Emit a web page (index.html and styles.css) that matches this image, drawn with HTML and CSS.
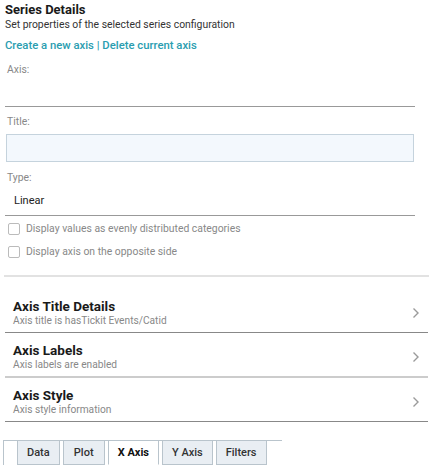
FILE: index.html
```html
<!DOCTYPE html>
<html lang="en">
<head>
    <meta charset="UTF-8">
    <title>Series Details</title>
    <link rel="stylesheet" href="styles.css">
</head>
<body>
    <div class="panel">
        <div class="header">
            <h2>Series Details</h2>
            <p class="subtitle">Set properties of the selected series configuration</p>
            <p class="links"><a href="#">Create a new axis</a> | <a href="#">Delete current axis</a></p>
        </div>

        <div class="form">
            <label class="field-label">Axis:</label>
            <div class="line-field"></div>

            <label class="field-label title-label">Title:</label>
            <input class="text-input" type="text">

            <label class="field-label type-label">Type:</label>
            <div class="line-field select-field">Linear</div>

            <label class="check"><span class="box"></span>Display values as evenly distributed categories</label>
            <label class="check"><span class="box"></span>Display axis on the opposite side</label>
        </div>

        <div class="separator"></div>

        <ul class="sections">
            <li class="section">
                <div>
                    <h3>Axis Title Details</h3>
                    <p>Axis title is hasTickit Events/Catid</p>
                </div>
                <svg class="chevron" width="8" height="12" viewBox="0 0 8 12"><path d="M1.5 1.5 L6 6 L1.5 10.5" fill="none" stroke="#9a9a9a" stroke-width="1.4"/></svg>
            </li>
            <li class="section light">
                <div>
                    <h3>Axis Labels</h3>
                    <p>Axis labels are enabled</p>
                </div>
                <svg class="chevron" width="8" height="12" viewBox="0 0 8 12"><path d="M1.5 1.5 L6 6 L1.5 10.5" fill="none" stroke="#9a9a9a" stroke-width="1.4"/></svg>
            </li>
            <li class="section">
                <div>
                    <h3>Axis Style</h3>
                    <p>Axis style information</p>
                </div>
                <svg class="chevron" width="8" height="12" viewBox="0 0 8 12"><path d="M1.5 1.5 L6 6 L1.5 10.5" fill="none" stroke="#9a9a9a" stroke-width="1.4"/></svg>
            </li>
        </ul>

        <div class="tabs">
            <span class="tab">Data</span>
            <span class="tab">Plot</span>
            <span class="tab active">X Axis</span>
            <span class="tab">Y Axis</span>
            <span class="tab">Filters</span>
        </div>
    </div>
</body>
</html>
```

FILE: styles.css
```css
body {
    margin: 0;
    font-family: Roboto, "Liberation Sans", sans-serif;
    background: #fff;
    color: #222;
}

.panel {
    width: 435px;
    height: 471px;
    overflow: hidden;
}

.header {
    padding: 2px 5px 0;
}

.header h2 {
    margin: 0;
    font-size: 13px;
    line-height: 16px;
    font-weight: bold;
    color: #1a1a1a;
}

.subtitle {
    margin: 0;
    font-size: 10.4px;
    line-height: 14px;
    color: #333;
}

.links {
    margin: 6px 0 0;
    font-size: 11.3px;
    line-height: 15px;
    font-weight: 500;
    color: #2a9db0;
}

.links a {
    color: #2a9db0;
    text-decoration: none;
}

.form {
    width: 410px;
    margin-left: 5px;
    display: flex;
    flex-direction: column;
}

.field-label {
    font-size: 10.4px;
    line-height: 14px;
    color: #888;
    margin: 10px 0 0 2px;
}

.title-label {
    margin-top: 8px;
}

.type-label {
    margin-top: 9px;
}

.line-field {
    height: 29px;
    border-bottom: 1px solid #999;
}

.select-field {
    height: 25px;
    margin-top: 5px;
    padding-left: 9px;
    font-size: 11px;
    line-height: 22px;
    color: #222;
}

.text-input {
    margin: 5px 0 0 1px;
    width: 408px;
    height: 28px;
    box-sizing: border-box;
    background: #f3f8fd;
    border: 1px solid #c5d3dd;
    outline: none;
}

.check {
    display: flex;
    align-items: center;
    gap: 6px;
    font-size: 10.4px;
    line-height: 14px;
    color: #888;
    margin: 6px 0 0 3px;
}

.check + .check {
    margin-top: 9px;
}

.box {
    width: 10px;
    height: 10px;
    border: 1px solid #bbb;
    border-radius: 2px;
}

.separator {
    margin: 16px 6px 0 4px;
    border-top: 2px solid #e2e2e2;
}

.sections {
    list-style: none;
    margin: 12px 7px 0 5px;
    padding: 0;
}

.section {
    display: flex;
    align-items: center;
    justify-content: space-between;
    box-sizing: border-box;
    height: 44px;
    border-bottom: 1px solid #888;
    padding: 5px 8px 0;
}

.section.light {
    height: 45px;
    border-bottom: 2px solid #ccc;
}

.section h3 {
    margin: 0;
    font-size: 13.5px;
    line-height: 15px;
    font-weight: bold;
    color: #1a1a1a;
}

.section p {
    margin: 0;
    font-size: 10.2px;
    line-height: 14px;
    color: #888;
}

.tabs {
    display: flex;
    gap: 3px;
    margin: 18px 0 0 3px;
    padding-left: 13px;
    width: 265px;
    border-top: 1px solid #b9c4cc;
    border-left: 1px solid #b9c4cc;
}

.tab {
    flex-shrink: 0;
    white-space: nowrap;
    box-sizing: border-box;
    min-width: 42px;
    text-align: center;
    margin-top: -1px;
    height: 25px;
    padding: 0 9px;
    font-size: 11px;
    line-height: 23px;
    font-weight: 500;
    color: #333;
    background: #e9eef3;
    border: 1px solid #b9c4cc;
}

.tab.active {
    background: #fff;
    color: #111;
    font-weight: bold;
    border-bottom-color: #fff;
}
```
